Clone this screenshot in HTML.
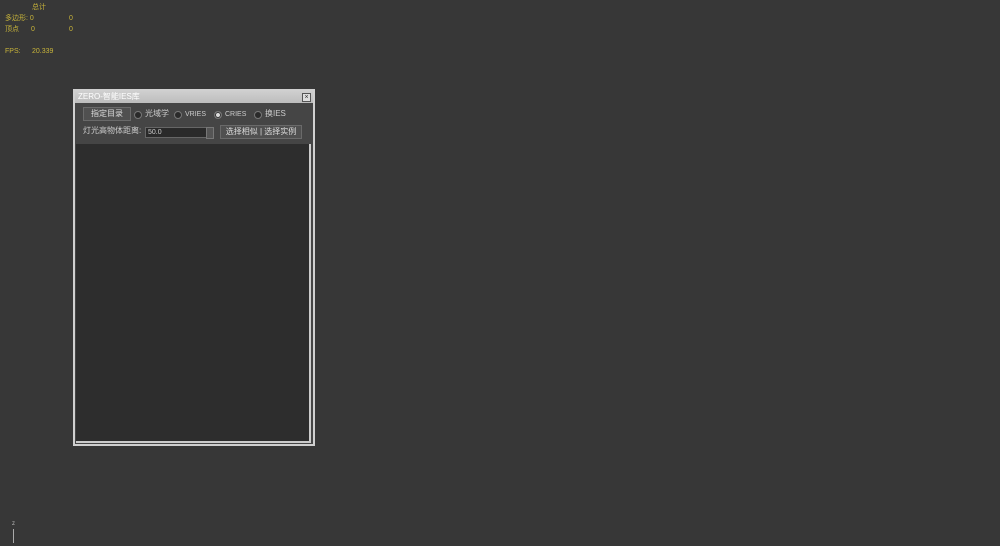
<!DOCTYPE html><html><head><meta charset="utf-8"><style>
body{margin:0;width:1000px;height:546px;background:#373737;position:relative;overflow:hidden;font-family:"Liberation Sans","Noto Sans CJK SC",sans-serif}
.y{position:absolute;color:#c8b43a;font-size:7px;line-height:8px}
.w{position:absolute;left:73px;top:89px;width:238px;height:353px;border:2px solid #d0d0d0;background:#454545}
.t{position:absolute;left:0;top:0;width:238px;height:12px;color:#fff;font-size:8px;line-height:12px;padding-left:3px;box-sizing:border-box;background:linear-gradient(#cfcfcf,#bdbdbd)}
.x{position:absolute;right:2px;top:2px;width:7px;height:7px;border:1px solid #555;background:#ddd;font-size:7px;line-height:7px;text-align:center;color:#333}
.b{position:absolute;background:#505050;border:1px solid #6a6a6a;color:#ddd;font-size:8px;text-align:center;box-sizing:border-box}
.l{position:absolute;color:#ccc;font-size:8px;line-height:10px}
.r{position:absolute;width:6px;height:6px;border-radius:50%;background:#2a2a2a;border:1px solid #777}
.list{position:absolute;left:1px;top:53px;width:233px;height:297px;background:#2d2d2d;border-right:2px solid #ccc;border-bottom:2px solid #ccc}
</style></head><body>
<div class="y" style="left:32px;top:4px">总计</div>
<div class="y" style="left:5px;top:15px">多边形: 0</div><div class="y" style="left:69px;top:15px">0</div>
<div class="y" style="left:5px;top:26px">顶点</div><div class="y" style="left:31px;top:26px">0</div><div class="y" style="left:69px;top:26px">0</div>
<div class="y" style="left:5px;top:48px">FPS:</div><div class="y" style="left:32px;top:48px">20.339</div>
<div class="w">
<div class="t">ZERO-智能IES库<div class="x">×</div></div>
<div class="b" style="left:8px;top:16px;width:48px;height:14px;line-height:12px">指定目录</div>
<div class="r" style="left:59px;top:20px"></div><div class="l" style="left:70px;top:18px">光域学</div>
<div class="r" style="left:99px;top:20px"></div><div class="l" style="left:110px;top:19px;font-size:7px">VRIES</div>
<div class="r" style="left:139px;top:20px;background:#ddd;box-shadow:inset 0 0 0 1px #2a2a2a"></div><div class="l" style="left:150px;top:19px;font-size:7px">CRIES</div>
<div class="r" style="left:179px;top:20px"></div><div class="l" style="left:190px;top:18px">换IES</div>
<div class="l" style="left:8px;top:35px">灯光高物体距离:</div>
<div style="position:absolute;left:70px;top:36px;width:60px;height:9px;background:#2a2a2a;border:1px solid #666;color:#ccc;font-size:7px;line-height:9px;padding-left:2px">50.0</div>
<div style="position:absolute;left:131px;top:36px;width:6px;height:10px;background:#555;border:1px solid #777"></div>
<div class="b" style="left:145px;top:34px;width:82px;height:14px;line-height:12px">选择相似 | 选择实例</div>
<div class="list"></div>
</div>
<div style="position:absolute;left:13px;top:529px;width:1px;height:14px;background:#aaa"></div>
<div style="position:absolute;left:12px;top:521px;font-size:6px;color:#bbb">z</div>
</body></html>
